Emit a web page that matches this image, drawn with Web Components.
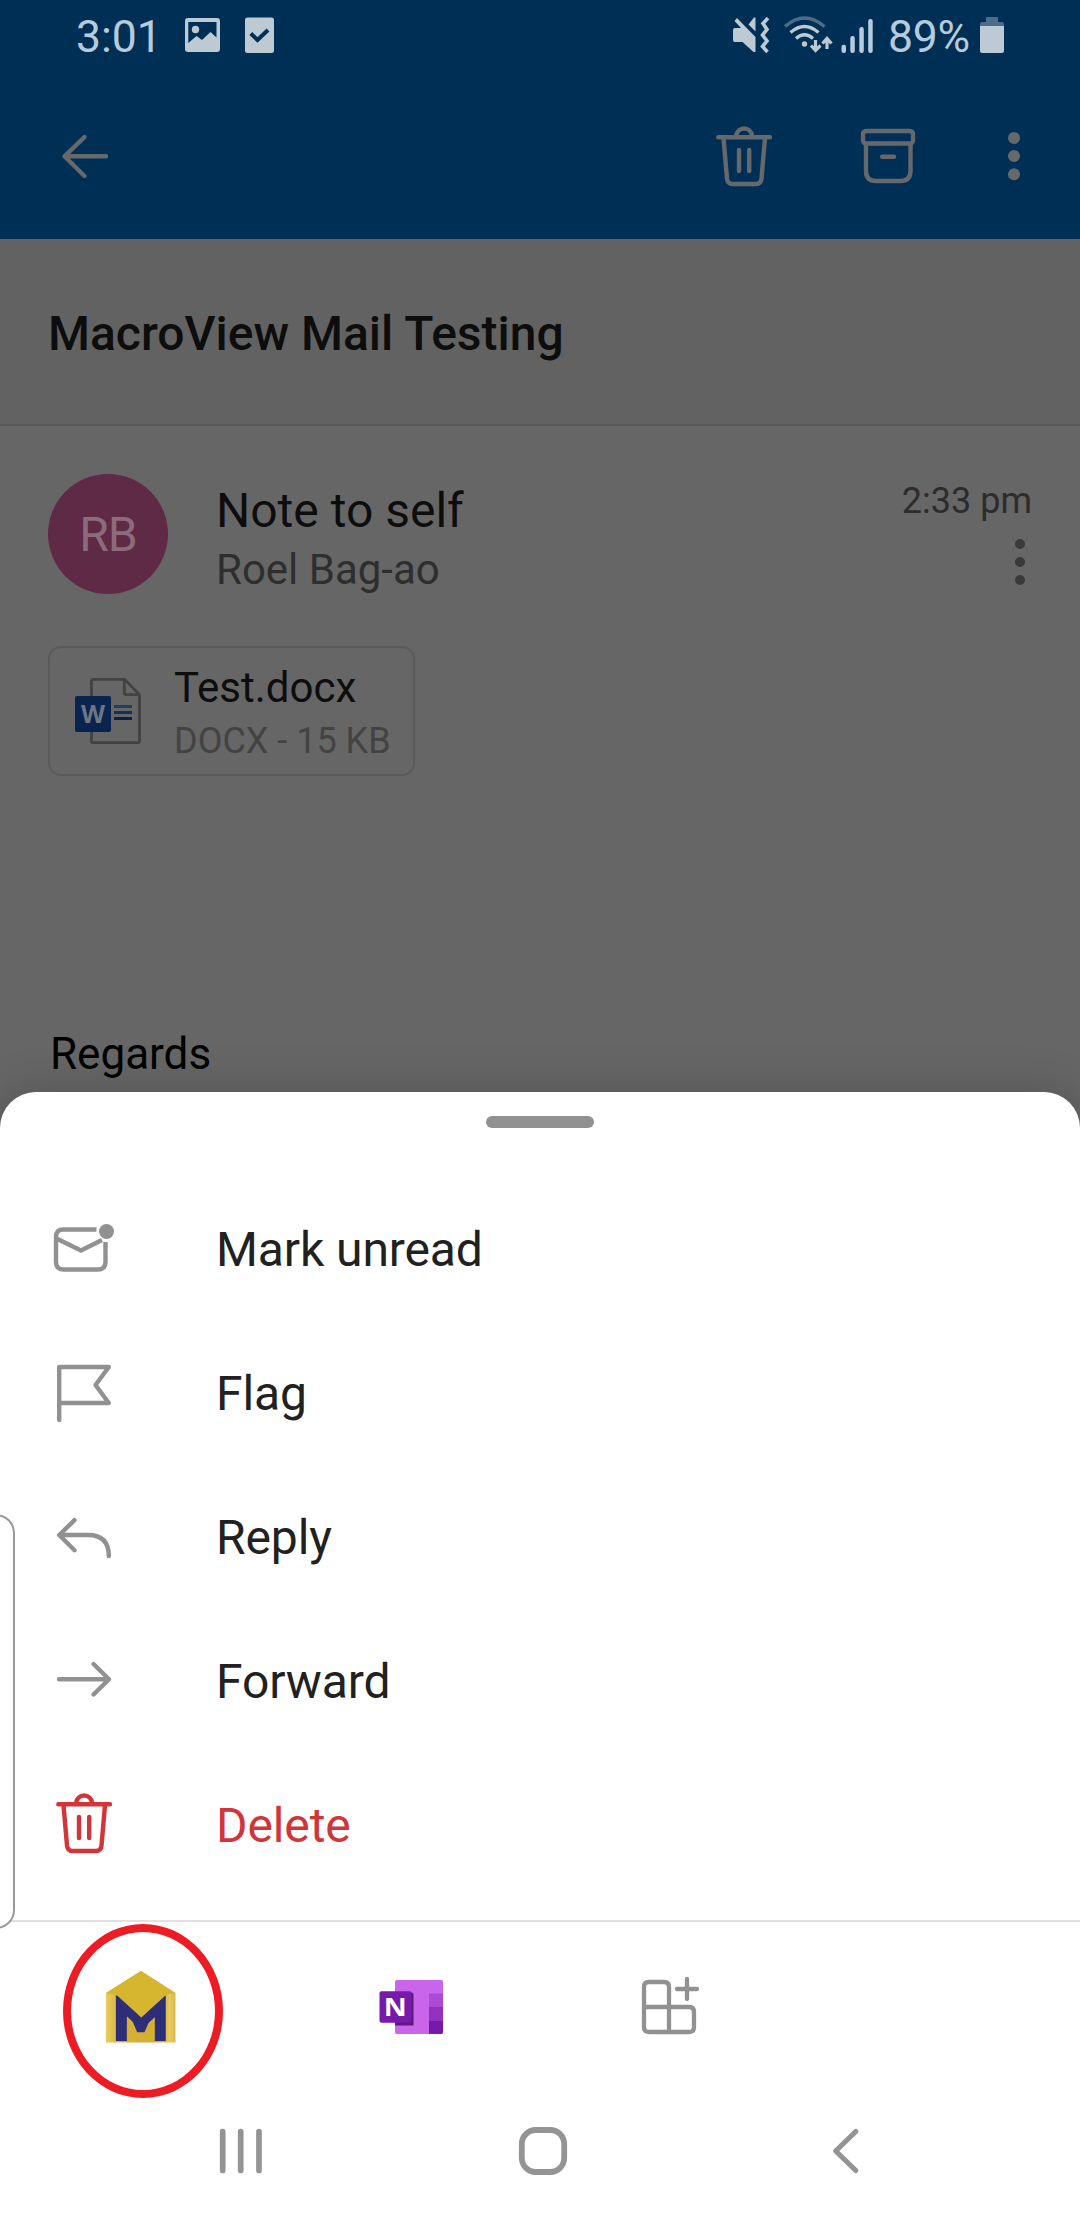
<!DOCTYPE html>
<html lang="en">
<head>
<meta charset="utf-8">
<title>Mail</title>
<style>
html,body{margin:0;padding:0}
body{width:1080px;height:2220px;overflow:hidden;font-family:Roboto,"Liberation Sans",sans-serif;background:#666}
</style>
</head>
<body>
<mail-app></mail-app>
<script>
const ICONS = {
  image: ['185 17 35 36', '<path fill="#bdc9d3" fill-rule="evenodd" d="M188 18H217Q220 18 220 21V49Q220 52 217 52H188Q185 52 185 49V21Q185 18 188 18ZM188.300 22V43L196.500 36L202 40L210.500 32L216.500 37.500V22Z"/><circle cx="195.500" cy="29.500" r="3.700" fill="#bdc9d3"/>'],
  task: ['245 17 29 36', '<rect x="245" y="17.500" width="29" height="35.500" rx="2.500" fill="#bdc9d3"/><path d="M250.800 33.500L257.500 40L268 30" fill="none" stroke="#002f55" stroke-width="4"/>'],
  mute: ['732 16 38 38', '<g fill="#bdc9d3"><path d="M735 28H741L734.500 21L737 18L755.500 37V52H753.500L742.500 42H735Q733 42 733 40V30Q733 28 735 28Z"/><path d="M755.500 17.500V31.500L748.500 24.500L754 17.500Z"/></g><path d="M768 18L763 23.500L767 29.500L762.500 35L767 41L762.500 46.500L767.500 52" fill="none" stroke="#bdc9d3" stroke-width="3.600"/>'],
  wifi: ['783 16 50 38', '<g fill="none" stroke-width="3.200"><path d="M785 26.500Q804.500 9.500 824.500 26.500" stroke="#4b6d8a"/><path d="M790.500 32.500Q804.500 20.500 818.500 32.500M796 38.500Q804.500 31 813 38.500" stroke="#bdc9d3"/><path d="M815.500 40V50M811 45.500L815.500 50.500L820.500 45.500M827 49V39M822.500 43.500L827 38.500L831.500 43.500" stroke="#bdc9d3"/></g><circle cx="804.500" cy="44" r="2.700" fill="#bdc9d3"/>'],
  signal: ['841 17 32 36', '<g fill="#b8cbdc"><rect x="841.500" y="44.700" width="4.500" height="8.300" rx="2"/><rect x="850.300" y="36" width="4.500" height="17" rx="2"/><rect x="859.300" y="27" width="4.500" height="26" rx="2"/><rect x="868.200" y="19" width="4.500" height="34" rx="2"/></g>'],
  battery: ['980 17 24 36', '<path d="M986 17H998V22H1002Q1004 22 1004 24V26H980V24Q980 22 982 22H986Z" fill="#4b6d8a"/><path d="M980 26H1004V51Q1004 53 1002 53H982Q980 53 980 51Z" fill="#bdcad6"/>'],
  back: ['60 130 50 50', '<path d="M106 155.300H64.500M84.500 136L64.500 155.300L84.500 175" fill="none" stroke="currentColor" stroke-width="4.400" stroke-linecap="round" stroke-linejoin="round"/>'],
  trash: ['714 123 60 65', '<g fill="none" stroke="currentColor" stroke-width="4.400" stroke-linecap="round" stroke-linejoin="round"><path d="M718.300 137.200H770M736.200 137V135.500A8 8.300 0 0 1 752 135.500V137M723.500 138L727 178.500Q727.600 184 732.500 184H756Q761 184 761.500 178.500L765 138M739 150V171M749.200 150V171"/></g>'],
  archive: ['860 127 57 58', '<g fill="none" stroke="currentColor" stroke-width="4.400" stroke-linecap="round" stroke-linejoin="round"><rect x="863" y="131" width="50" height="12.500" rx="3"/><path d="M866 144V171Q866 181 876 181H900.500Q910.500 181 910.500 171V144M882.200 156.700H894"/></g>'],
  more: ['1007 131 14 50', '<g fill="currentColor"><circle cx="1014" cy="138" r="6"/><circle cx="1014" cy="156" r="6"/><circle cx="1014" cy="174.200" r="6"/></g>'],
  moreSmall: ['1014 538 12 48', '<g fill="currentColor"><circle cx="1020" cy="544" r="5"/><circle cx="1020" cy="562" r="5"/><circle cx="1020" cy="580" r="5"/></g>'],
  word: ['74 677 68 68', '<path d="M91.500 696V681Q91.500 679.300 93.200 679.300H124.500L139.500 694.500V741Q139.500 742.700 137.800 742.700H93.200Q91.500 742.700 91.500 741V732" fill="none" stroke="#424242" stroke-width="2.800"/><path d="M124.300 680V692.500Q124.300 694.700 126.500 694.700H139" fill="none" stroke="#424242" stroke-width="2.800"/><rect x="75" y="696" width="36" height="36" rx="2" fill="#0a2450"/><path d="M114 706.500H132" stroke="#1a4360" stroke-width="3"/><path d="M114 712.500H132" stroke="#113158" stroke-width="3"/><path d="M114 718.500H132" stroke="#0a2147" stroke-width="3"/><text x="93" y="723" text-anchor="middle" textLength="24" lengthAdjust="spacingAndGlyphs" font-family="Open Sans" font-weight="700" font-size="25" fill="#6f7783">W</text>'],
  unread: ['53 1222 62 52', '<path d="M96.500 1229.500H63.500Q56 1229.500 56 1237V1262Q56 1269.500 63.500 1269.500H98Q105.500 1269.500 105.500 1262V1242M57.500 1239L81 1250.500L102 1240" fill="none" stroke="currentColor" stroke-width="4.400"/><circle cx="106.500" cy="1231.500" r="7.500" fill="currentColor"/>'],
  flag: ['55 1363 58 60', '<path d="M59.200 1420V1367H108.800L95.500 1385L108.800 1403H60" fill="none" stroke="currentColor" stroke-width="4.400" stroke-linecap="round" stroke-linejoin="round"/>'],
  reply: ['55 1515 58 46', '<path d="M74.500 1520.200L59.200 1535L74.500 1550.200M60 1535H88Q108.800 1535 108.800 1556" fill="none" stroke="currentColor" stroke-width="4.400" stroke-linecap="round" stroke-linejoin="round"/>'],
  forward: ['55 1660 58 38', '<path d="M59 1679.200H108.500M93.500 1664L109 1679.200L93.500 1694.500" fill="none" stroke="currentColor" stroke-width="4.400" stroke-linecap="round" stroke-linejoin="round"/>'],
  macro: ['104 1970 74 74', '<defs><linearGradient id="g"><stop offset="0" stop-color="#e9cb60"/><stop offset=".2" stop-color="#d5b137"/><stop offset=".8" stop-color="#d3ae31"/><stop offset=".92" stop-color="#e6c95f"/><stop offset="1" stop-color="#dcb94b"/></linearGradient></defs><path d="M141 1971L175.500 1993V2042.500H106V1993Z" fill="url(#g)"/><text transform="translate(110.300 2040.500) scale(1 1.020)" font-family="DejaVu Sans" font-weight="700" font-size="61.500" fill="#2e2d77">M</text><path d="M121 2005L141.300 2023.500L161.500 2005" fill="none" stroke="#2e2d77" stroke-width="9"/><path d="M141 1971L175.500 1993L166.500 1994.500L141.300 2017.500L116 1994.500L106 1993Z" fill="#d6b52f"/>'],
  onenote: ['379 1979 65 56', '<rect x="395" y="1980" width="48" height="54" rx="2" fill="#ca64ea"/><path d="M429 1993.500H443V2007H429Z" fill="#ab4ad2"/><path d="M429 2007H443V2020.500H429Z" fill="#9332bf"/><path d="M429 2020.500H443V2032Q443 2034 441 2034H429Z" fill="#7719aa"/><path d="M395 1992.500H411.500Q413.500 1992.500 413.500 1994.500V2025.500H395Z" fill="#591d78"/><rect x="379.500" y="1991.300" width="32" height="31.500" rx="2" fill="#7719aa"/><text x="395.300" y="2016" text-anchor="middle" textLength="23" lengthAdjust="spacingAndGlyphs" font-family="Open Sans" font-weight="700" font-size="25" fill="#fff">N</text>'],
  apps: ['640 1975 61 61', '<path d="M669 2032V1987Q669 1982 664 1982H649Q644 1982 644 1987V2027Q644 2032 649 2032H689Q694 2032 694 2027V2012Q694 2007 689 2007H644M687 1979V1999M677 1989H697" fill="none" stroke="currentColor" stroke-width="4.300" stroke-linecap="round"/>'],
  recents: ['219 2128 44 46', '<path d="M222.700 2131.500V2170.500M240.700 2131.500V2170.500M259 2131.500V2170.500" stroke="currentColor" stroke-width="5.700" stroke-linecap="round"/>'],
  home: ['518 2126 50 50', '<rect x="521.800" y="2130" width="42.400" height="42" rx="14" fill="none" stroke="currentColor" stroke-width="5.800"/>'],
  navback: ['830 2126 30 50', '<path d="M855.800 2131.500L835.700 2151L855.800 2170.500" fill="none" stroke="currentColor" stroke-width="5.200" stroke-linecap="round" stroke-linejoin="round"/>']
};

const define = (tag, markup) => customElements.define(tag, class extends HTMLElement {
  constructor() {
    super();
    this.attachShadow({ mode: 'open' }).innerHTML = markup;
  }
});

customElements.define('line-icon', class extends HTMLElement {
  constructor() { super(); this.attachShadow({ mode: 'open' }); }
  connectedCallback() {
    const [box, art] = ICONS[this.getAttribute('name')];
    const [, , w, h] = box.split(' ');
    this.shadowRoot.innerHTML = `<style>:host{display:block;flex:none}svg{display:block;overflow:visible}</style><svg width="${w}" height="${h}" viewBox="${box}">${art}</svg>`;
  }
});

define('status-bar', `<style>
:host{display:flex;justify-content:space-between;height:70px;color:#b8cbdc;font-size:44.500px;line-height:74px}
div{display:flex}
line-icon{margin-top:17px}
.l{padding-left:76px}.r{padding-right:76px}
.t{width:109px}.p{width:92px;letter-spacing:-.200px}
</style>
<div class="l"><span class="t">3:01</span><line-icon name="image"></line-icon><line-icon name="task" style="margin-left:25px"></line-icon></div>
<div class="r"><line-icon name="mute" style="margin-top:16px"></line-icon><line-icon name="wifi" style="margin:16px 8px 0 13px"></line-icon><line-icon name="signal" style="margin-right:15px"></line-icon><span class="p">89%</span><line-icon name="battery"></line-icon></div>`);

define('tool-bar', `<style>
:host{display:flex;align-items:center;height:169px;color:#66696b;padding:2px 59px 0 60px;box-sizing:border-box}
div{display:flex;align-items:center;margin-left:auto}
</style>
<line-icon name="back"></line-icon>
<div><line-icon name="trash"></line-icon><line-icon name="archive" style="margin:0 90px 0 86px"></line-icon><line-icon name="more"></line-icon></div>`);

define('mail-subject', `<style>
:host{display:block;height:185px;background:#626262;border-bottom:2px solid #595959;padding-left:48px;font-size:48px;font-weight:500;line-height:189px;color:#0d0d0d}
</style><slot></slot>`);

define('mail-sender', `<style>
:host{display:flex;padding:48px 48px 0 48px;height:172px;box-sizing:border-box}
.av{width:120px;height:120px;border-radius:50%;background:#5f2a45;color:#8c6b7c;font-size:48px;line-height:122px;text-align:center;margin-right:48px;letter-spacing:-1px}
.who{flex:1;padding-top:9px}
.n{font-size:48px;line-height:56px;color:#0d0d0d}
.s{font-size:42px;line-height:62px;color:#2e2e2e}
.m{display:flex;flex-direction:column;align-items:flex-end;color:#2c2c2c;font-size:36px;line-height:54px}
line-icon{color:#3a3a3a;margin:10px 6px 0 0}
</style>
<div class="av">RB</div>
<div class="who"><div class="n"><slot name="name"></slot></div><div class="s"><slot name="from"></slot></div></div>
<div class="m"><slot name="time"></slot><line-icon name="moreSmall"></line-icon></div>`);

define('mail-attachment', `<style>
:host{display:flex;align-items:center;box-sizing:border-box;width:367px;height:130px;margin:48px 0 0 48px;border:2px solid #5a5a5a;border-radius:13px;padding-left:24px}
.t{margin:6px 0 0 32px}
.n{font-size:42px;line-height:54px;color:#0d0d0d}
.k{font-size:36px;line-height:52px;color:#434343}
</style>
<line-icon name="word"></line-icon>
<div class="t"><div class="n"><slot></slot></div><div class="k"><slot name="kind"></slot></div></div>`);

define('action-row', `<style>
:host{display:flex;align-items:center;height:144px;font-size:48px;line-height:56px;color:#212121}
.i{width:161px;color:#919191;padding-left:55px;box-sizing:border-box;height:66px;display:flex;align-items:center}
.t{margin:2px 0 0 55px;letter-spacing:-.100px}
:host([danger]),:host([danger]) .i{color:#d13539}
</style><div class="i"><slot name="icon"></slot></div><div class="t"><slot></slot></div>`);

define('action-sheet', `<style>
:host{display:flex;flex-direction:column;height:1128px;background:#fff;border-radius:36px 36px 0 0;box-shadow:0 0 48px rgba(0,0,0,.18)}
.grip{width:108px;height:12px;border-radius:6px;background:#919191;margin:24px auto 49px}
.rows{height:743px;border-bottom:2px solid #e1e1e1}
</style><div class="grip"></div><div class="rows"><slot></slot></div><slot name="footer"></slot>`);

define('addin-bar', `<style>
:host{display:flex;height:168px;color:#919191;padding-left:104px}
.m{margin:48px 201px 0 0;position:relative}
.ring{position:absolute;left:-41px;top:-46px;width:144px;height:158px;border:8px solid #ed1c24;border-radius:50%}
</style>
<div class="m"><line-icon name="macro"></line-icon><div class="ring"></div></div>
<line-icon name="onenote" style="margin:57px 196px 0 0"></line-icon>
<line-icon name="apps" style="margin-top:53px"></line-icon>`);

define('nav-bar', `<style>
:host{display:flex;align-items:center;height:122px;color:#949494;padding-left:219px}
</style><line-icon name="recents"></line-icon><line-icon name="home" style="margin:0 262px 0 255px"></line-icon><line-icon name="navback"></line-icon>`);

define('edge-handle', `<style>
:host{position:absolute;left:-30px;top:1514px;width:41px;height:411px;border:2px solid #999;border-radius:19px;background:#fff}
</style>`);

define('mail-app', `<style>
:host{display:block;position:relative;width:1080px;height:2220px;overflow:hidden;background:#666}
header{background:#002f55;height:239px}
main{height:853px}
.body{padding:248px 0 0 50px;font-size:44px;line-height:60px;color:#000}
</style>
<header><status-bar></status-bar><tool-bar></tool-bar></header>
<main>
<mail-subject>MacroView Mail Testing</mail-subject>
<mail-sender><span slot="name">Note to self</span><span slot="from">Roel Bag-ao</span><span slot="time">2:33 pm</span></mail-sender>
<mail-attachment>Test.docx<span slot="kind">DOCX - 15 KB</span></mail-attachment>
<div class="body">Regards</div>
</main>
<action-sheet>
<action-row><line-icon slot="icon" name="unread" style="margin:0 0 2px -2px"></line-icon>Mark unread</action-row>
<action-row><line-icon slot="icon" name="flag"></line-icon>Flag</action-row>
<action-row><line-icon slot="icon" name="reply" style="margin-top:2px"></line-icon>Reply</action-row>
<action-row><line-icon slot="icon" name="forward" style="margin-bottom:4px"></line-icon>Forward</action-row>
<action-row danger><line-icon slot="icon" name="trash" style="margin:0 0 5px -1px"></line-icon>Delete</action-row>
<addin-bar slot="footer"></addin-bar>
<nav-bar slot="footer"></nav-bar>
</action-sheet>
<edge-handle></edge-handle>`);
</script>
</body>
</html>
